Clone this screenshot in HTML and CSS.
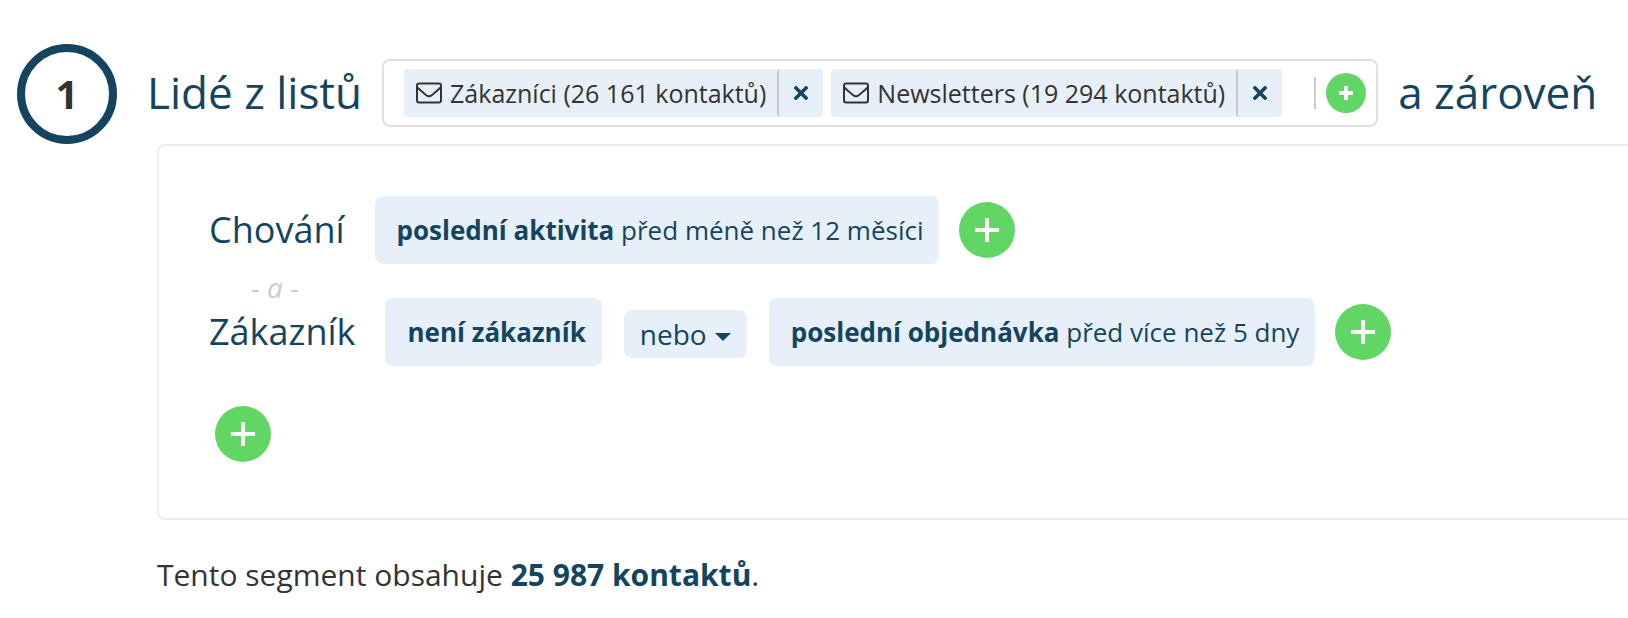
FILE: index.html
```
<!DOCTYPE html>
<html lang="cs">
<head>
<meta charset="utf-8">
<title>Segment</title>
<link rel="stylesheet" href="styles.css">
</head>
<body>
<svg class="defs" aria-hidden="true">
  <symbol id="mail" viewBox="0 0 26 22">
    <rect x="1" y="1.5" width="24" height="19" rx="2" fill="none" stroke="currentColor" stroke-width="2"/>
    <path d="M1.5 5.5C5 9 7.500 10.800 10 13Q13 15.600 16 13C18.500 10.800 21 9 24.500 5.500" fill="none" stroke="currentColor" stroke-width="1.800"/>
  </symbol>
  <symbol id="cross" viewBox="0 0 14 14">
    <path d="M2 2L12 12M12 2L2 12" fill="none" stroke="currentColor" stroke-width="3.600" stroke-linecap="square"/>
  </symbol>
  <symbol id="plus" viewBox="0 0 24 24">
    <path d="M12 0V24M0 12H24" fill="none" stroke="currentColor" stroke-width="4"/>
  </symbol>
  <symbol id="plus-small" viewBox="0 0 14 14">
    <path d="M7 0V14M0 7H14" fill="none" stroke="currentColor" stroke-width="4"/>
  </symbol>
</svg>
<main class="segment">
  <header class="lists">
    <span class="step">1</span>
    <h1 class="heading">Lidé z listů</h1>
    <div class="picker">
      <span class="tag"><span class="tag-label"><svg class="mail"><use href="#mail"/></svg>Zákazníci (26 161 kontaktů)</span><button class="tag-remove" type="button" aria-label="Odebrat Zákazníci"><svg class="cross"><use href="#cross"/></svg></button></span>
      <span class="tag"><span class="tag-label"><svg class="mail"><use href="#mail"/></svg>Newsletters (19 294 kontaktů)</span><button class="tag-remove" type="button" aria-label="Odebrat Newsletters"><svg class="cross"><use href="#cross"/></svg></button></span>
      <span class="picker-add"><button class="add add-small" type="button" aria-label="Přidat list"><svg class="plus"><use href="#plus-small"/></svg></button></span>
    </div>
    <span class="heading">a zároveň</span>
  </header>
  <section class="panel">
    <div class="row">
      <h2 class="group">Chování</h2>
      <button class="chip" type="button"><b>poslední aktivita</b> před méně než 12 měsíci</button>
      <button class="add" type="button" aria-label="Přidat podmínku chování"><svg class="plus"><use href="#plus"/></svg></button>
    </div>
    <div class="joiner">- a -</div>
    <div class="row">
      <h2 class="group">Zákazník</h2>
      <button class="chip" type="button"><b>není zákazník</b></button>
      <div class="operator">
        <select class="operator-select" aria-label="Spojka podmínek"><option>nebo</option></select>
        <svg class="caret" viewBox="0 0 16 8"><path d="M0 0H16L8 8Z" fill="currentColor"/></svg>
      </div>
      <button class="chip" type="button"><b>poslední objednávka</b> před více než 5 dny</button>
      <button class="add" type="button" aria-label="Přidat podmínku zákazníka"><svg class="plus"><use href="#plus"/></svg></button>
    </div>
    <div class="row row-new">
      <button class="add" type="button" aria-label="Přidat skupinu"><svg class="plus"><use href="#plus"/></svg></button>
    </div>
  </section>
  <p class="summary">Tento segment obsahuje <b>25 987 kontaktů</b>.</p>
</main>
</body>
</html>
```
FILE: styles.css
```
* {
  box-sizing: border-box;
}

body {
  margin: 0;
  background: #fff;
  color: #333;
  font-family: "Open Sans", "Noto Sans", sans-serif;
  overflow-x: hidden;
}

button,
select {
  border: 0;
  margin: 0;
  font-family: inherit;
  color: inherit;
  cursor: pointer;
}

.defs {
  display: none;
}

.segment {
  padding-top: 44px;
}

.lists {
  display: flex;
  align-items: center;
  padding-left: 17px;
  white-space: nowrap;
}

.step {
  flex: none;
  display: flex;
  align-items: center;
  justify-content: center;
  width: 100px;
  height: 100px;
  padding-bottom: 2px;
  border: 8px solid #144560;
  border-radius: 50%;
  font-size: 40px;
  font-weight: 700;
}

.heading {
  margin: 0 0 4px 30px;
  color: #144560;
  font-size: 44px;
  font-weight: 400;
  line-height: 60px;
}

.picker {
  display: flex;
  align-items: center;
  gap: 8px;
  height: 68px;
  margin: 0 0 2px 20px;
  padding: 0 10px 0 20px;
  border: 2px solid #e0e0e0;
  border-radius: 8px;
}

.picker + .heading {
  margin-left: 20px;
}

.tag {
  display: flex;
  height: 48px;
  border-radius: 4px;
  background: #e7f0f8;
  font-size: 25px;
  line-height: 48px;
}

.tag-label {
  display: flex;
  align-items: center;
  gap: 8px;
  padding: 0 11px 0 12px;
}

.mail {
  width: 26px;
  height: 22px;
}

.tag-remove {
  display: flex;
  align-items: center;
  justify-content: center;
  width: 46px;
  padding: 0;
  border-left: 2px solid #c8c8c8;
  border-radius: 4px;
  background: none;
  color: #144560;
}

.cross {
  width: 14px;
  height: 14px;
}

.picker-add {
  display: flex;
  align-items: center;
  gap: 10px;
  margin-left: 24px;
}

.picker-add::before {
  content: "";
  width: 2px;
  height: 32px;
  background: #ccc;
}

.add {
  flex: none;
  display: flex;
  align-items: center;
  justify-content: center;
  width: 56px;
  height: 56px;
  padding: 0;
  border-radius: 50%;
  background: #62d665;
  color: #fff;
}

.plus {
  width: 24px;
  height: 24px;
}

.add-small {
  width: 40px;
  height: 40px;
}

.add-small .plus {
  width: 14px;
  height: 14px;
}

.panel {
  margin-left: 157px;
  padding: 50px 0 50px 50px;
  border: 2px solid #eee;
  border-right: 0;
  border-radius: 8px 0 0 8px;
}

.row {
  display: flex;
  align-items: center;
  height: 68px;
  white-space: nowrap;
}

.row-new {
  margin-top: 34px;
  padding-left: 6px;
}

.group {
  margin: 0 30px 0 0;
  color: #144560;
  font-size: 36px;
  font-weight: 400;
  line-height: 48px;
}

.chip {
  height: 68px;
  margin-right: 20px;
  padding: 0 16px 0 22px;
  border-radius: 8px;
  background: #e7f0f8;
  color: #144560;
  font-size: 26px;
}

.joiner {
  height: 34px;
  padding: 14px 0 0 42px;
  color: #ccc;
  font-size: 28px;
  font-style: italic;
  line-height: 18px;
}

.operator {
  display: grid;
  align-items: center;
  margin: 4px 22px 0 2px;
  color: #144560;
}

.operator-select {
  grid-area: 1 / 1;
  height: 48px;
  padding: 0 40px 0 16px;
  border-radius: 8px;
  background: #e7f0f8;
  font-size: 28px;
  appearance: none;
}

.caret {
  grid-area: 1 / 1;
  justify-self: end;
  width: 16px;
  height: 8px;
  margin: 6px 16px 0 0;
  pointer-events: none;
}

.summary {
  margin: 0;
  padding: 35px 0 0 157px;
  font-size: 30px;
  line-height: 40px;
}

.summary b {
  color: #144560;
}
```
